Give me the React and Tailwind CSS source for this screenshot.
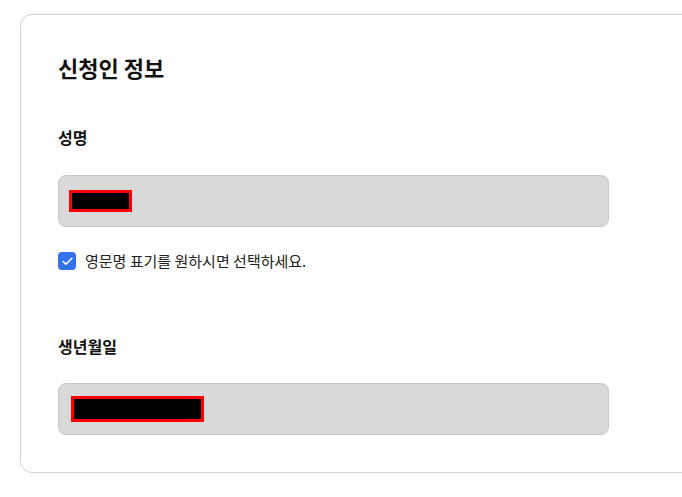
import { Check } from 'lucide-react';

const font = { fontFamily: '"Noto Sans CJK KR", "Noto Sans", sans-serif' };

const Redacted = ({ className }) => (
  <span className={`inline-block bg-black border-[3px] border-[#ff0000] ${className}`} />
);

const App = () => {
  return (
    <div className="w-[682px] h-[497px] overflow-hidden bg-white" style={font}>
      <div className="pl-5 pt-[14px]">
        {/* Applicant card */}
        <div className="w-[720px] rounded-xl border border-[#cfcfcf] bg-white px-[37px] pt-[38px] pb-[37px]">
          <h2 className="text-[22px] leading-[28px] font-bold text-[#111111]">신청인 정보</h2>

          {/* Name */}
          <div className="mt-[44px] text-[16px] leading-[24px] font-bold text-[#111111]">성명</div>
          <div className="mt-[26px] w-[551px] h-[52px] rounded-lg border border-[#c6c6c6] bg-[#d9d9d9] flex items-center pl-[10px]">
            <Redacted className="w-[63px] h-[22px]" />
          </div>

          <label className="mt-[24px] flex items-center gap-[9px]">
            <span className="w-[18px] h-[18px] rounded-[4px] bg-[#3273ea] flex items-center justify-center">
              <Check className="w-[13px] h-[13px] text-white" strokeWidth={3} />
            </span>
            <span className="text-[15px] leading-[20px] text-[#222222]">영문명 표기를 원하시면 선택하세요.</span>
          </label>

          {/* Birth date */}
          <div className="mt-[63px] text-[16px] leading-[24px] font-bold text-[#111111]">생년월일</div>
          <div className="mt-[25px] w-[551px] h-[52px] rounded-lg border border-[#c6c6c6] bg-[#d9d9d9] flex items-center pl-[12px]">
            <Redacted className="w-[133px] h-[26px]" />
          </div>
        </div>
      </div>
    </div>
  );
};

export default App;
